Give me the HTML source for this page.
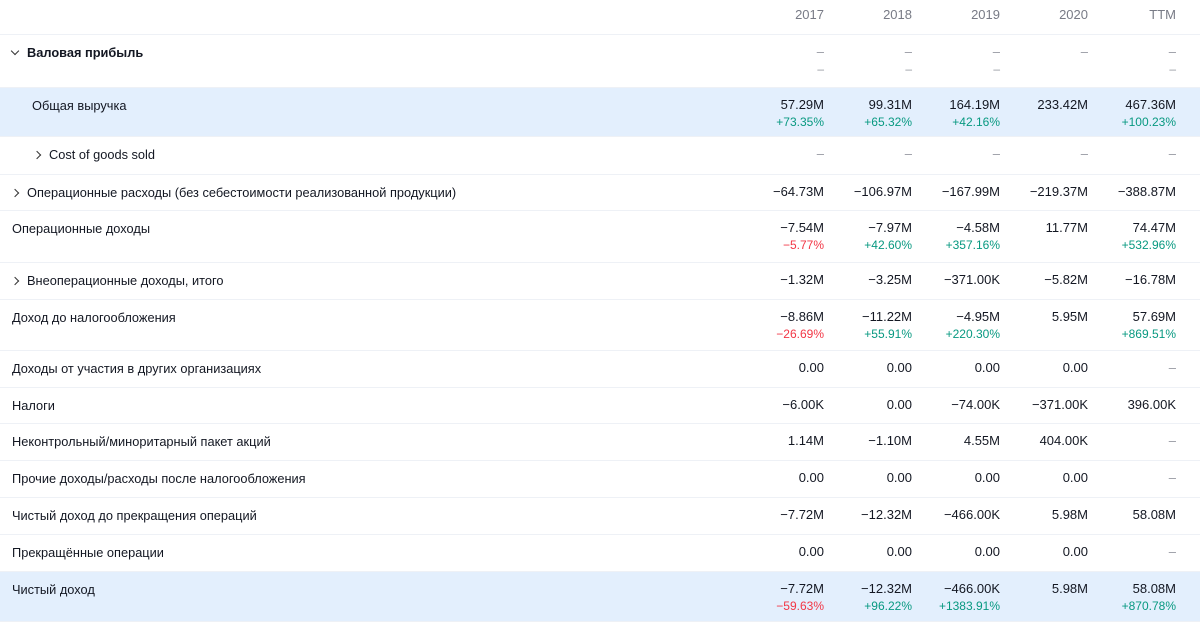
<!DOCTYPE html>
<html><head><meta charset="utf-8"><style>
body{margin:0;width:1200px;height:622px;overflow:hidden;background:#fff;font-family:"Liberation Sans",sans-serif;font-size:13px;color:#131722}
.r{position:absolute;left:0;width:1200px;border-bottom:1px solid #eef1f6;box-sizing:border-box}
.b{background:#e3effd}
.l{position:absolute;top:10px;line-height:16px;white-space:nowrap;font-size:12.8px}
.c{position:absolute;top:9px;width:100px;text-align:right;line-height:16px}
.s{font-size:12px;top:26px}
.g{color:#089981}.red{color:#f23645}.d{color:#9598a1}
.h{color:#787b86;top:7px}
.ch{display:inline-block;width:5px;height:5px;border-right:1.3px solid #333;border-bottom:1.3px solid #333;transform:rotate(-45deg);margin-right:9px;position:relative;top:-1px}
.dn{transform:rotate(45deg);top:-3px}
</style></head><body>
<div id="t"></div>
<script>
const xs=[724,812,900,988,1076];
const rows=[
[0,35,null,["2017","2018","2019","2020","TTM"],null,"h"],
[35,88,'<span class="ch dn"></span><b>Валовая прибыль</b>',["–","–","–","–","–"],["–","–","–","","–"],"",12],
[88,137,'Общая выручка',["57.29M","99.31M","164.19M","233.42M","467.36M"],["+73.35%","+65.32%","+42.16%","","+100.23%"],"b",32],
[137,175,'<span class="ch"></span>Cost of goods sold',["–","–","–","–","–"],null,"",34],
[175,211,'<span class="ch"></span>Операционные расходы (без себестоимости реализованной продукции)',["−64.73M","−106.97M","−167.99M","−219.37M","−388.87M"],null,"",12],
[211,263,'Операционные доходы',["−7.54M","−7.97M","−4.58M","11.77M","74.47M"],["−5.77%","+42.60%","+357.16%","","+532.96%"],"",12],
[263,300,'<span class="ch"></span>Внеоперационные доходы, итого',["−1.32M","−3.25M","−371.00K","−5.82M","−16.78M"],null,"",12],
[300,351,'Доход до налогообложения',["−8.86M","−11.22M","−4.95M","5.95M","57.69M"],["−26.69%","+55.91%","+220.30%","","+869.51%"],"",12],
[351,388,'Доходы от участия в других организациях',["0.00","0.00","0.00","0.00","–"],null,"",12],
[388,424,'Налоги',["−6.00K","0.00","−74.00K","−371.00K","396.00K"],null,"",12],
[424,461,'Неконтрольный/миноритарный пакет акций',["1.14M","−1.10M","4.55M","404.00K","–"],null,"",12],
[461,498,'Прочие доходы/расходы после налогообложения',["0.00","0.00","0.00","0.00","–"],null,"",12],
[498,535,'Чистый доход до прекращения операций',["−7.72M","−12.32M","−466.00K","5.98M","58.08M"],null,"",12],
[535,572,'Прекращённые операции',["0.00","0.00","0.00","0.00","–"],null,"",12],
[572,622,'Чистый доход',["−7.72M","−12.32M","−466.00K","5.98M","58.08M"],["−59.63%","+96.22%","+1383.91%","","+870.78%"],"b",12]];
let h="";
for(const r of rows){
 h+=`<div class="r ${r[5]=="b"?"b":""}" style="top:${r[0]}px;height:${r[1]-r[0]}px">`;
 if(r[2])h+=`<div class="l" style="left:${r[6]}px">${r[2]}</div>`;
 r[3].forEach((v,i)=>{let cl=r[5]=="h"?"h":(v=="–"?"d":"");h+=`<div class="c ${cl}" style="left:${xs[i]}px">${v}</div>`});
 if(r[4])r[4].forEach((v,i)=>{let cl=v=="–"?"d":(v[0]=="+"?"g":"red");h+=`<div class="c s ${cl}" style="left:${xs[i]}px">${v}</div>`});
 h+="</div>";
}
document.getElementById("t").innerHTML=h;
</script>
</body></html>
